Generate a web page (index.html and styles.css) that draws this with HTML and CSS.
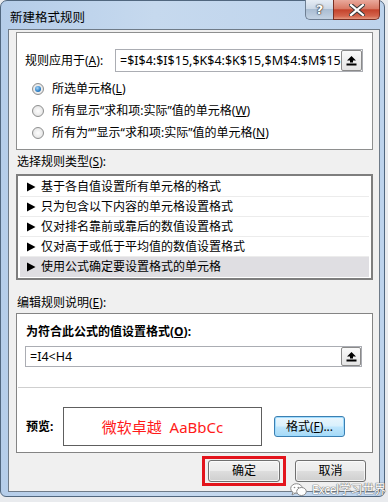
FILE: index.html
```html
<!DOCTYPE html>
<html lang="zh-CN">
<head>
<meta charset="utf-8">
<title>新建格式规则</title>
<link rel="stylesheet" href="styles.css">
</head>
<body>
<div class="window">
  <div class="titlebar">
    <span class="title">新建格式规则</span>
    <div class="caption-btns">
      <span class="cap-help">?</span>
      <span class="cap-close">
        <svg width="16" height="12" viewBox="0 0 16 12"><path d="M2 1 L14 11 M14 1 L2 11" stroke="#3a3a3a" stroke-width="4.2" stroke-linecap="square"/><path d="M2 1 L14 11 M14 1 L2 11" stroke="#fff" stroke-width="2.2" stroke-linecap="square"/></svg>
      </span>
    </div>
  </div>
  <div class="client">
    <div class="apply-panel">
      <div class="apply-row">
        <span class="apply-label">规则应用于(<u>A</u>):</span>
        <div class="ref-input">
          <span class="ref-text">=$I$4:$I$15,$K$4:$K$15,$M$4:$M$15</span>
          <span class="collapse"><svg width="11" height="11" viewBox="0 0 11 11"><polygon points="5.5,1 10,5.5 7,5.5 7,7.5 4,7.5 4,5.5 1,5.5" fill="#000"/><rect x="0.5" y="8.5" width="10" height="2" fill="#000"/></svg></span>
        </div>
      </div>
      <div class="radios">
        <div class="radio-row"><span class="radio checked"><span class="dot"></span></span><span>所选单元格(<u>L</u>)</span></div>
        <div class="radio-row"><span class="radio"></span><span>所有显示“求和项:实际”值的单元格(<u>W</u>)</span></div>
        <div class="radio-row"><span class="radio"></span><span>所有为“”显示“求和项:实际”值的单元格(<u>N</u>)</span></div>
      </div>
    </div>
    <div class="gray-area">
      <div class="section-label">选择规则类型(<u>S</u>):</div>
      <ul class="rule-list">
        <li><svg class="tri" width="9" height="10" viewBox="0 0 9 10"><polygon points="0,0.5 8.5,5 0,9.5" fill="#000"/></svg>基于各自值设置所有单元格的格式</li>
        <li><svg class="tri" width="9" height="10" viewBox="0 0 9 10"><polygon points="0,0.5 8.5,5 0,9.5" fill="#000"/></svg>只为包含以下内容的单元格设置格式</li>
        <li><svg class="tri" width="9" height="10" viewBox="0 0 9 10"><polygon points="0,0.5 8.5,5 0,9.5" fill="#000"/></svg>仅对排名靠前或靠后的数值设置格式</li>
        <li><svg class="tri" width="9" height="10" viewBox="0 0 9 10"><polygon points="0,0.5 8.5,5 0,9.5" fill="#000"/></svg>仅对高于或低于平均值的数值设置格式</li>
        <li class="selected"><svg class="tri" width="9" height="10" viewBox="0 0 9 10"><polygon points="0,0.5 8.5,5 0,9.5" fill="#000"/></svg>使用公式确定要设置格式的单元格</li>
      </ul>
      <div class="section-label second">编辑规则说明(<u>E</u>):</div>
      <div class="desc-panel">
        <div class="desc-title">为符合此公式的值设置格式(<u>O</u>):</div>
        <div class="formula-input">
          <span class="formula-text">=I4&lt;H4</span>
          <span class="collapse"><svg width="11" height="11" viewBox="0 0 11 11"><polygon points="5.5,1 10,5.5 7,5.5 7,7.5 4,7.5 4,5.5 1,5.5" fill="#000"/><rect x="0.5" y="8.5" width="10" height="2" fill="#000"/></svg></span>
        </div>
        <div class="sep"></div>
        <div class="preview-row">
          <span class="preview-label">预览:</span>
          <div class="preview-box">微软卓越&nbsp;&nbsp;AaBbCc</div>
          <span class="btn btn-focus">格式(<u>F</u>)...</span>
        </div>
      </div>
      <div class="actions">
        <div class="highlight"><span class="btn btn-ok">确定</span></div>
        <span class="btn btn-cancel">取消</span>
      </div>
    </div>
  </div>
  <div class="watermark">
    <svg width="17" height="14" viewBox="0 0 17 14"><ellipse cx="6.5" cy="5.5" rx="5.8" ry="4.8" fill="#fff" stroke="#8a8a8a" stroke-width="1"/><path d="M3 9 L2 12 L5.5 10" fill="#fff" stroke="#8a8a8a" stroke-width="1"/><ellipse cx="11.5" cy="8.5" rx="4.8" ry="4" fill="#fff" stroke="#8a8a8a" stroke-width="1"/><circle cx="4.5" cy="4.5" r="0.8" fill="#8a8a8a"/><circle cx="8.3" cy="4.5" r="0.8" fill="#8a8a8a"/></svg>
    <span class="wm-text">Excel学习世界</span>
  </div>
</div>
</body>
</html>
```
FILE: styles.css
```css
* { box-sizing: border-box; }
html, body { margin: 0; padding: 0; }
body {
  width: 388px;
  height: 502px;
  background: #e9ebee;
  font-family: "Noto Sans", "Noto Sans CJK SC", sans-serif;
  font-size: 12px;
  color: #000;
  overflow: hidden;
}
u { text-decoration: underline; text-underline-offset: 1px; }

.window {
  position: relative;
  width: 385px;
  height: 497px;
  border: 1px solid #51677f;
  border-radius: 7px 7px 6px 6px;
  background: linear-gradient(90deg, #b5cde9 0%, #c6d9ee 40%, #bdd3ec 100%);
  padding: 0 4px 4px 7px;
  display: flex;
  flex-direction: column;
}

.titlebar {
  height: 28px;
  display: flex;
  justify-content: space-between;
  align-items: flex-start;
  flex-shrink: 0;
}
.title {
  font-family: "Noto Sans CJK SC", sans-serif;
  font-size: 12.5px;
  line-height: 16px;
  margin: 8px 0 0 2px;
  color: #000;
}
.caption-btns {
  display: flex;
  margin-top: -1px;
}
.cap-help {
  width: 28px;
  height: 20px;
  border: 1px solid #6e7f93;
  border-top: none;
  border-right: none;
  border-radius: 0 0 0 5px;
  background: linear-gradient(#e6edf5 0%, #ccd8e6 45%, #aabdd2 50%, #c3d3e4 100%);
  color: #fff;
  font-family: "DejaVu Sans", sans-serif;
  font-weight: bold;
  font-size: 13px;
  line-height: 19px;
  text-align: center;
  text-shadow: 0 0 1px #333, 0 0 1px #333, 0 0 2px #333;
}
.cap-close {
  width: 47px;
  height: 20px;
  border: 1px solid #7a3024;
  border-top: none;
  border-radius: 0 0 5px 0;
  background: linear-gradient(#e9a99c 0%, #d97a66 45%, #c4432c 52%, #d4654d 85%, #e39a82 100%);
  display: flex;
  align-items: center;
  justify-content: center;
}

.client {
  height: 463px;
  background: #f0f0f0;
  border: 1px solid #6f7b88;
  display: flex;
  flex-direction: column;
}

.apply-panel {
  height: 118px;
  margin: 2px 6px 0 7px;
  background: #fff;
  border: 1px solid #8e8f8f;
  padding: 16px 0 0 8px;
  flex-shrink: 0;
}
.apply-row {
  display: flex;
  align-items: center;
  height: 23px;
}
.apply-label {
  width: 90px;
  flex-shrink: 0;
  line-height: 16px;
}
.ref-input {
  width: 248px;
  height: 23px;
  border: 1px solid #abadb3;
  display: flex;
  align-items: center;
  padding-left: 4px;
}
.ref-text {
  flex: 1;
  font-family: "Noto Sans", sans-serif;
  font-size: 12.5px;
  line-height: 16px;
  white-space: nowrap;
  overflow: hidden;
}
.collapse {
  width: 21px;
  height: 21px;
  border: 1px solid #8a8a8a;
  border-radius: 2px;
  background: linear-gradient(#fafafa, #e4e4e4);
  display: flex;
  align-items: center;
  justify-content: center;
  flex-shrink: 0;
}
.radios {
  margin-top: 6px;
  padding-left: 7px;
}
.radio-row {
  height: 22px;
  display: flex;
  align-items: center;
  gap: 8px;
  line-height: 16px;
}
.radio {
  width: 12px;
  height: 12px;
  border-radius: 50%;
  border: 1px solid #8e8f8f;
  background: radial-gradient(circle at 50% 50%, #fdfdfd 0%, #ececec 55%, #d4d4d4 100%);
  display: flex;
  align-items: center;
  justify-content: center;
  flex-shrink: 0;
}
.radio .dot {
  width: 6px;
  height: 6px;
  border-radius: 50%;
  background: radial-gradient(circle at 40% 35%, #a9d6f7 0%, #2c7fc6 60%, #1a5a95 100%);
}

.gray-area {
  padding: 0 6px 0 7px;
  display: flex;
  flex-direction: column;
}
.section-label {
  margin-top: 3px;
  line-height: 18px;
  padding-left: 1px;
}
.section-label.second { margin-top: 14px; }

.rule-list {
  list-style: none;
  margin: 3px 0 0 0;
  padding: 1px 2px;
  height: 106px;
  border: 2px solid #7e7e7e;
  background: #fff;
}
.rule-list li {
  height: 20px;
  display: flex;
  align-items: center;
  padding-left: 7px;
  gap: 5px;
  border-bottom: 1px solid #ececec;
  line-height: 16px;
}
.rule-list li.selected {
  background: #dfdee2;
  border-bottom: none;
}
.tri { flex-shrink: 0; }

.desc-panel {
  margin-top: 1px;
  height: 140px;
  background: #fff;
  border: 1px solid #848484;
  padding: 9px 0 0 0;
}
.desc-title {
  line-height: 18px;
  font-weight: bold;
  padding-left: 9px;
}
.formula-input {
  margin: 5px 10px 0 8px;
  height: 21px;
  border: 1px solid #abadb3;
  display: flex;
  align-items: center;
  padding-left: 4px;
}
.formula-text {
  flex: 1;
  font-size: 12.5px;
  line-height: 16px;
}
.formula-input .collapse {
  height: 19px;
  width: 20px;
}
.sep {
  margin: 20px 1px 0 1px;
  height: 1px;
  background: #cfcfcf;
}
.preview-row {
  margin-top: 19px;
  display: flex;
  align-items: center;
  padding-left: 9px;
}
.preview-label {
  font-weight: bold;
  width: 37px;
  line-height: 16px;
}
.preview-box {
  width: 199px;
  height: 39px;
  border: 1px solid #5e5e5e;
  display: flex;
  align-items: center;
  justify-content: center;
  color: #ff1a1a;
  font-size: 15px;
  line-height: 18px;
}
.btn {
  display: flex;
  align-items: center;
  justify-content: center;
  width: 72px;
  height: 22px;
  border: 1px solid #707070;
  border-radius: 3px;
  background: linear-gradient(#f2f2f2 0%, #ebebeb 48%, #dddddd 52%, #cfcfcf 100%);
  box-shadow: inset 0 0 0 1px rgba(255,255,255,0.7);
  line-height: 16px;
}
.btn-focus {
  margin-left: 12px;
  width: 71px;
  height: 21px;
  border-color: #3c7fb1;
  background: linear-gradient(#eaf6fd 0%, #d9f0fc 48%, #bee6fd 52%, #a7d9f5 100%);
  box-shadow: inset 0 0 0 1px #9fdcff;
}
.actions {
  margin-top: 3px;
  display: flex;
  justify-content: flex-end;
  align-items: center;
  padding-right: 7px;
  gap: 9px;
}
.highlight {
  border: 3px solid #e3141c;
  padding: 1px 3px;
}
.btn-cancel { width: 71px; }

.watermark {
  position: absolute;
  left: 289px;
  top: 482px;
  display: flex;
  align-items: center;
  gap: 5px;
  white-space: nowrap;
}
.wm-text {
  color: #fff;
  font-size: 12px;
  line-height: 14px;
  text-shadow: 0 0 1px #6a6a6a, 0 0 1px #6a6a6a, 0 0 1px #6a6a6a;
  letter-spacing: -0.3px;
}
```
